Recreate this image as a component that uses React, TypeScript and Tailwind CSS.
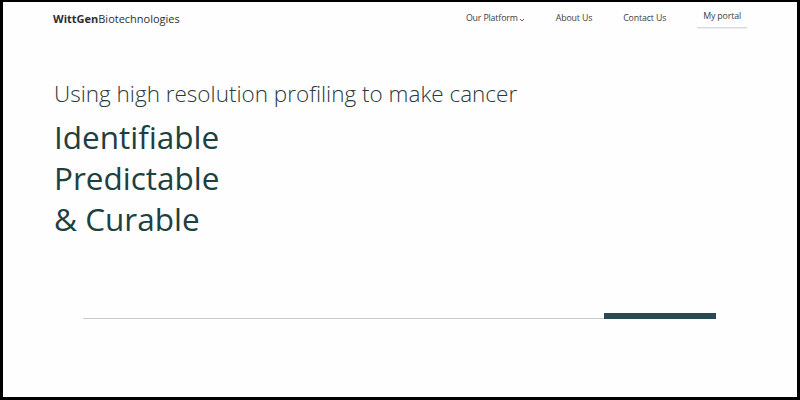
import React from 'react';

const navItems = ['About Us', 'Contact Us'];

const App: React.FC = () => {
  return (
    <div className="w-[800px] h-[400px] bg-black pt-[2px] pl-[3px] pr-[3px] pb-[3px]" style={{ fontFamily: '"Open Sans", sans-serif' }}>
      <div className="w-full h-full bg-[#fefefe] flex flex-col">
        {/* Header */}
        <header className="flex items-center justify-between h-[34px] pl-[50px] pr-[50px]">
          <div className="text-[11px] text-[#2b2f33]">
            <span className="font-bold">WittGen</span>
            <span>Biotechnologies</span>
          </div>
          <nav className="flex items-center text-[8.8px] text-[#3a3f44] tracking-[-0.15px]">
            <span className="flex items-center gap-[1px]">
              Our Platform
              <svg width="6" height="6" viewBox="0 0 6 6" className="mt-[2px]">
                <path d="M1 2 L3 4 L5 2" stroke="#3a3f44" strokeWidth="0.8" fill="none" />
              </svg>
            </span>
            {navItems.map((item) => (
              <span key={item} className="ml-[31px]">{item}</span>
            ))}
            <span className="ml-[31px] px-[6px] pb-[3px] border-b border-[#d6d9dc] shadow-[0_1px_1px_rgba(0,0,0,0.06)]">
              My portal
            </span>
          </nav>
        </header>

        {/* Hero */}
        <section className="pl-[51px] pt-[42px]">
          <p className="text-[22.5px] font-light text-[#2a3a3a] leading-[31px]">
            Using high resolution profiling to make cancer
          </p>
          <h1 className="mt-[7px] text-[31.5px] font-normal text-[#1d4040] leading-[41px]">
            <span className="block">Identifiable</span>
            <span className="block">Predictable</span>
            <span className="block">&amp; Curable</span>
          </h1>
        </section>

        {/* Progress line */}
        <div className="mt-auto mb-[78px] ml-[80px] mr-[81px] flex items-end">
          <div className="flex-1 h-[1px] bg-[#c9cccf]" />
          <div className="w-[112px] h-[6px] bg-[#2a4a53]" />
        </div>
      </div>
    </div>
  );
};

export default App;
